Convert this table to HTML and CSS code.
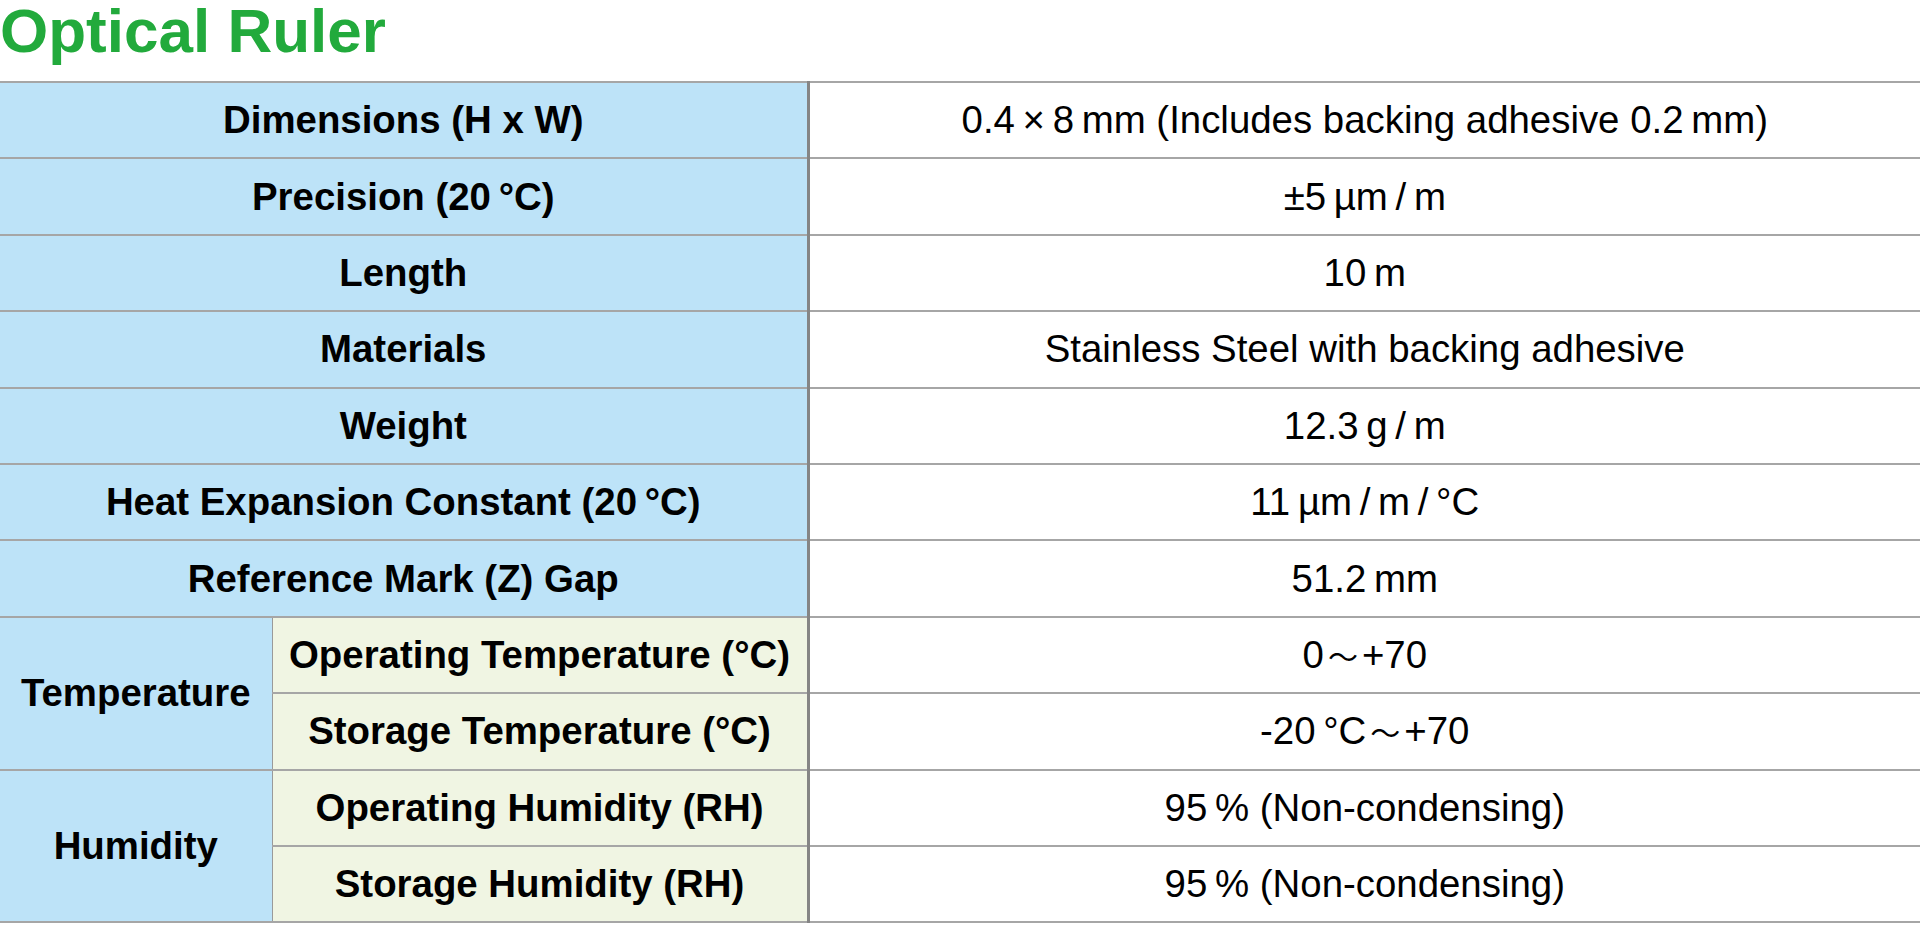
FILE: index.html
```html
<!DOCTYPE html>
<html lang="en">
<head>
<meta charset="utf-8">
<title>Optical Ruler</title>
<link rel="stylesheet" href="styles.css">
</head>
<body>
<h1 class="title">Optical Ruler</h1>
<table class="spec">
  <colgroup>
    <col class="c-group">
    <col class="c-sub">
    <col class="c-val">
  </colgroup>
  <tbody>
    <tr><th class="lbl" colspan="2">Dimensions (H x W)</th><td class="val">0.4&#8201;×&#8201;8&#8201;mm (Includes backing adhesive 0.2&#8201;mm)</td></tr>
    <tr><th class="lbl" colspan="2">Precision (20&#8201;°C)</th><td class="val">±5&#8201;µm&#8201;/&#8201;m</td></tr>
    <tr><th class="lbl" colspan="2">Length</th><td class="val">10&#8201;m</td></tr>
    <tr><th class="lbl" colspan="2">Materials</th><td class="val">Stainless Steel with backing adhesive</td></tr>
    <tr><th class="lbl" colspan="2">Weight</th><td class="val">12.3&#8201;g&#8201;/&#8201;m</td></tr>
    <tr><th class="lbl" colspan="2">Heat Expansion Constant (20&#8201;°C)</th><td class="val">11&#8201;µm&#8201;/&#8201;m&#8201;/&#8201;°C</td></tr>
    <tr><th class="lbl" colspan="2">Reference Mark (Z) Gap</th><td class="val">51.2&#8201;mm</td></tr>
    <tr><th class="lbl grp" rowspan="2">Temperature</th><th class="sub">Operating Temperature (°C)</th><td class="val">0<span class="wave">～</span>+70</td></tr>
    <tr><th class="sub">Storage Temperature (°C)</th><td class="val">-20&#8201;°C<span class="wave">～</span>+70</td></tr>
    <tr><th class="lbl grp" rowspan="2">Humidity</th><th class="sub">Operating Humidity (RH)</th><td class="val">95&#8201;% (Non-condensing)</td></tr>
    <tr><th class="sub">Storage Humidity (RH)</th><td class="val">95&#8201;% (Non-condensing)</td></tr>
  </tbody>
</table>
</body>
</html>
```

FILE: styles.css
```css
html, body {
  margin: 0;
  padding: 0;
  background: #ffffff;
}

body {
  font-family: "Liberation Sans", Arial, sans-serif;
  color: #000;
}

.title {
  margin: 0 0 19px 0;
  font-size: 62px;
  line-height: 62px;
  font-weight: 700;
  color: #22aa3c;
}

.spec {
  width: 1920px;
  border-collapse: collapse;
  table-layout: fixed;
}

.c-group { width: 272px; }
.c-sub { width: 536px; }

.spec tr {
  height: 76.4px;
}

.spec th,
.spec td {
  padding: 0;
  text-align: center;
  vertical-align: middle;
  font-size: 38.4px;
  border-top: 2px solid #a6a6a6;
  border-bottom: 2px solid #a6a6a6;
  white-space: nowrap;
}

.lbl {
  background: #bde3f8;
  font-weight: 700;
  border-right: 3px solid #858585;
}

.grp {
  border-right: 1px solid #9a9a9a;
}

.sub {
  background: #f0f5e3;
  font-weight: 700;
  border-left: 1px solid #9a9a9a;
  border-right: 3px solid #858585;
}

.val {
  background: #ffffff;
  font-weight: 400;
}

.wave {
  font-family: "Noto Sans CJK JP", sans-serif;
  font-size: 30px;
  padding: 0 4px;
}
```
